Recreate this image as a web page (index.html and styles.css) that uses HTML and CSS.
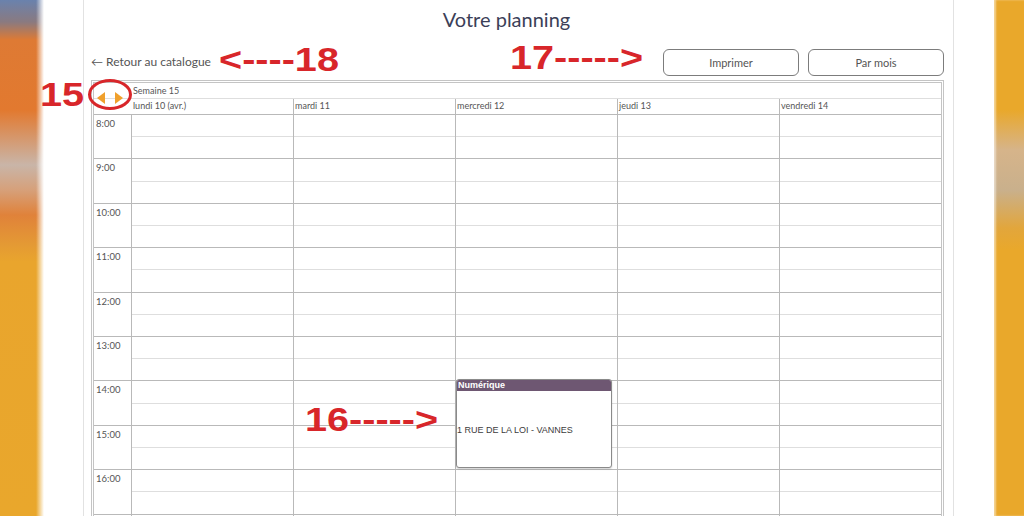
FILE: index.html
```html
<!DOCTYPE html>
<html lang="fr">
<head>
    <meta charset="UTF-8">
    <meta name="viewport" content="width=device-width, initial-scale=1.0">
    <title>Votre planning</title>
    <link rel="stylesheet" href="styles.css">
</head>
<body>
    <div class="strip strip-left"></div>
    <main class="page">
        <div class="card">
            <h1 class="title">Votre planning</h1>
            <div class="toolbar">
                <a href="#" class="back-link">&larr; Retour au catalogue</a>
                <div class="actions">
                    <button class="btn">Imprimer</button>
                    <button class="btn">Par mois</button>
                </div>
            </div>
            <div class="calendar">
                <div class="cal-row cal-week">
                    <div class="cal-nav">
                        <span class="tri tri-left"></span>
                        <span class="tri tri-right"></span>
                    </div>
                    <div class="cal-week-label">Semaine 15</div>
                </div>
                <div class="cal-row cal-days">
                    <div class="cal-time"></div>
                    <div class="cal-day">lundi 10 (avr.)</div>
                    <div class="cal-day">mardi 11</div>
                    <div class="cal-day">mercredi 12</div>
                    <div class="cal-day">jeudi 13</div>
                    <div class="cal-day">vendredi 14</div>
                </div>
                <div class="cal-body" id="calBody"></div>
            </div>
        </div>

        <!-- annotations -->
        <span class="note note-15">15</span>
        <span class="note-ring"></span>
        <span class="note note-18">&lt;----18</span>
        <span class="note note-17">17-----&gt;</span>
        <span class="note note-16">16-----&gt;</span>
    </main>
    <div class="strip strip-right"></div>

    <script>
        const body = document.getElementById('calBody');
        // last row only peeks in at the bottom edge, no label
        const hours = [8, 9, 10, 11, 12, 13, 14, 15, 16, null];

        hours.forEach(h => {
            const row = document.createElement('div');
            row.className = 'cal-row cal-hour';
            row.innerHTML = '<div class="cal-time">' + (h === null ? '' : h + ':00') + '</div>';
            for (let d = 0; d < 5; d++) {
                const cell = document.createElement('div');
                cell.className = 'cal-slot';
                cell.innerHTML = '<div class="half"></div><div class="half"></div>';
                if (h === 14 && d === 2) {
                    cell.innerHTML += '<div class="event"><div class="event-head">Numérique</div><div class="event-body">1 RUE DE LA LOI - VANNES</div></div>';
                }
                row.appendChild(cell);
            }
            body.appendChild(row);
        });
    </script>
</body>
</html>
```

FILE: styles.css
```css
:root {
    --grid-line: #b9b9b9;
    --grid-soft: #dedede;
    --text-grey: #555;
    --note-red: #d8262a;
    --accent: #f0a02c;
    --event-purple: #6e5772;
}
* { box-sizing: border-box; margin: 0; padding: 0; }
html, body { height: 100%; }
body {
    display: flex;
    height: 516px;
    overflow: hidden;
    background: #fff;
    font-family: 'Lato', 'Open Sans', Arial, sans-serif;
    color: var(--text-grey);
}
.strip { flex: none; }
.strip-left {
    width: 44px;
    background:
        linear-gradient(90deg, rgba(255,255,255,0) 0, rgba(255,255,255,0) 36px, #fff 44px),
        linear-gradient(180deg, #6a82ad 0, #8a7a80 22px, #de7a34 40px, #e2792f 110px, #c9b5a8 165px, #d6a07a 190px, #e0823a 215px, #e49a34 245px, #e9a52d 262px, #e9a72c 100%);
}
.strip-right {
    width: 31px;
    background: linear-gradient(180deg, #e9a82b 0, #e9a82b 110px, #d6b48a 150px, #c9b08c 190px, #e2a63c 228px, #e9a82b 250px, #e9a82b 100%);
    box-shadow: inset 2px 0 2px rgba(255,255,255,0.5);
}
.page {
    flex: 1;
    position: relative;
    padding: 0 40px 0 39px;
}
.card {
    height: 100%;
    border-left: 1px solid #e2e2e2;
    border-right: 1px solid #e2e2e2;
    padding: 0 9px 0 7px;
}
.title {
    text-align: center;
    font-weight: 400;
    font-size: 20px;
    color: #3c3f58;
    padding: 7px 22px 0 0;
    height: 48px;
    font-family: 'Lato', 'Open Sans', sans-serif;
}
.toolbar {
    display: flex;
    justify-content: space-between;
    align-items: center;
    height: 28px;
    margin-bottom: 4px;
}
.back-link {
    font-size: 12px;
    color: #555;
    text-decoration: none;
    margin-top: -2px;
}
.actions { display: flex; gap: 9px; }
.btn {
    width: 136px;
    height: 27px;
    border: 1px solid #7c7c7c;
    border-radius: 6px;
    background: #fff;
    color: #555;
    font-size: 11px;
    font-family: 'Lato', 'Open Sans', sans-serif;
}
.calendar {
    border: 3px double #c4c4c4;
    border-bottom: none;
    width: 853px;
    height: 436px;
    overflow: hidden;
    font-size: 9px;
}
.cal-row { display: flex; }
.cal-week {
    height: 16px;
    border-bottom: 1px solid var(--grid-soft);
}
.cal-nav {
    width: 38px;
    flex: none;
    display: flex;
    align-items: center;
    justify-content: center;
    gap: 10px;
    padding: 14px 6px 0 0;
}
.tri {
    width: 0; height: 0;
    border-top: 6.5px solid transparent;
    border-bottom: 6.5px solid transparent;
}
.tri-left { border-right: 8px solid var(--accent); }
.tri-right { border-left: 8px solid var(--accent); }
.cal-week-label { padding: 2px 1px 0; }
.cal-days { height: 16px; border-bottom: 1px solid var(--grid-line); }
.cal-time {
    width: 38px;
    flex: none;
    padding: 2px 2px;
    border-right: 1px solid var(--grid-line);
}
.cal-days .cal-time { border-right: none; }
.cal-day {
    flex: 1;
    padding: 1px 1px;
    border-right: 1px solid var(--grid-line);
}
.cal-days .cal-day:first-of-type { border-left: 1px solid var(--grid-line); }
.cal-day:last-child, .cal-slot:last-child { border-right: none; }
.cal-hour {
    height: 44.4px;
    border-bottom: 1px solid var(--grid-line);
}
.cal-hour .cal-time { font-size: 9.5px; padding-top: 3px; }
.cal-slot {
    flex: 1;
    position: relative;
    border-right: 1px solid var(--grid-line);
    display: flex;
    flex-direction: column;
}
.half { flex: 1; }
.half:first-child { border-bottom: 1px solid var(--grid-soft); }
.event {
    position: absolute;
    z-index: 2;
    top: -2px;
    left: 0;
    width: 156px;
    height: 89px;
    border: 1px solid #8a8a8a;
    border-radius: 3px;
    background: #fff;
    overflow: hidden;
    font-family: 'Liberation Sans', Arial, sans-serif;
    box-shadow: 0 1px 2px rgba(0,0,0,0.2);
}
.event-head {
    background: var(--event-purple);
    color: #fff;
    font-weight: 700;
    font-size: 9px;
    padding: 0 1px;
    height: 11px;
    line-height: 11px;
}
.event-body {
    font-size: 9px;
    color: #3c3c3c;
    padding: 34px 0 0;
}
.note {
    position: absolute;
    z-index: 3;
    font-family: 'Liberation Sans', Arial, sans-serif;
    font-weight: 700;
    color: var(--note-red);
    font-size: 33px;
    line-height: 1;
    white-space: nowrap;
    transform: scaleX(1.2);
    transform-origin: left top;
}
.note-15 { left: -4px; top: 78px; }
.note-18 { left: 175px; top: 43px; }
.note-17 { left: 466px; top: 41px; }
.note-16 { left: 261px; top: 403px; }
.note-ring {
    position: absolute;
    z-index: 3;
    left: 44px;
    top: 79px;
    width: 44px;
    height: 31px;
    border: 3px solid var(--note-red);
    border-radius: 50%;
}
```
